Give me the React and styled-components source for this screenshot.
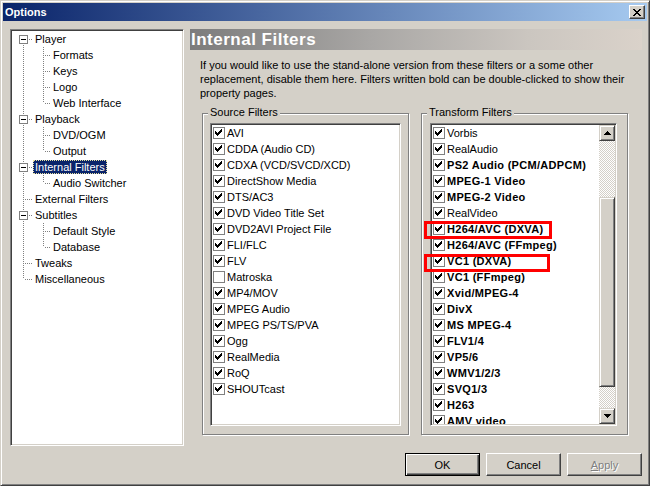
import React from 'react';
import styled, { createGlobalStyle } from 'styled-components';

const GlobalStyle = createGlobalStyle`
  html, body { margin: 0; padding: 0; background: #D4D0C8; }
  body { font-family: "Liberation Sans", Arial, sans-serif; font-size: 11px; color: #000; }
  * { box-sizing: border-box; }
`;

const Window = styled.div`
  width: 650px;
  height: 486px;
  background: #D4D0C8;
  border: 1px solid;
  border-color: #D4D0C8 #404040 #404040 #D4D0C8;
  box-shadow: inset 1px 1px 0 #fff, inset -1px -1px 0 #808080;
  padding: 2px;
  display: flex;
  flex-direction: column;
`;

const TitleBar = styled.div`
  height: 18px;
  flex-shrink: 0;
  display: flex;
  align-items: center;
  justify-content: space-between;
  padding: 0 2px 0 2px;
  background: linear-gradient(90deg, #0A246A 0%, #A6CAF0 100%);
`;

const TitleText = styled.span`
  color: #fff;
  font-weight: bold;
  font-size: 11px;
  line-height: 18px;
`;

const CloseButton = styled.div`
  width: 16px;
  height: 14px;
  background: #D4D0C8;
  border: 1px solid;
  border-color: #fff #404040 #404040 #fff;
  box-shadow: inset -1px -1px 0 #808080;
  display: flex;
  align-items: center;
  justify-content: center;
`;

const Client = styled.div`
  flex: 1;
  display: flex;
  flex-direction: column;
  padding: 8px 5px 0 7px;
`;

const MainRow = styled.div`
  display: flex;
  gap: 6px;
  height: 417px;
`;

const Sunken = styled.div`
  background: #fff;
  border: 1px solid;
  border-color: #808080 #fff #fff #808080;
  box-shadow: inset 1px 1px 0 #404040, inset -1px -1px 0 #D4D0C8;
`;

const Tree = styled(Sunken)`
  width: 174px;
  height: 100%;
  padding: 1px 0 0 2px;
  display: flex;
  flex-direction: column;
`;

const TreeRow = styled.div`
  height: 16px;
  display: flex;
  align-items: center;
`;

const Glyph = styled.svg`
  display: block;
  flex-shrink: 0;
  shape-rendering: crispEdges;
`;

const TreeLabel = styled.span`
  line-height: 14px;
  height: 14px;
  padding: 0 2px;
  white-space: nowrap;
  background: ${p => (p.$selected ? '#0A246A' : 'transparent')};
  color: ${p => (p.$selected ? '#fff' : '#000')};
  outline: ${p => (p.$selected ? '1px dotted #E8E0A0' : 'none')};
  outline-offset: -1px;
`;

const RightPane = styled.div`
  width: 452px;
  display: flex;
  flex-direction: column;
`;

const Header = styled.div`
  height: 21px;
  flex-shrink: 0;
  padding-left: 1px;
  background: linear-gradient(90deg, #7c7c7c 0%, #a9a7a5 40%, #cbc6c0 75%, #dad2ca 100%);
  color: #fff;
  font-weight: bold;
  font-size: 17px;
  letter-spacing: 0.5px;
  line-height: 21px;
`;

const Description = styled.div`
  margin: 8px 0 0 10px;
  line-height: 14px;
  white-space: nowrap;
`;

const Groups = styled.div`
  display: flex;
  gap: 12px;
  margin: 13px 0 0 12px;
`;

const GroupBox = styled.div`
  width: 207px;
  height: 322px;
  border: 1px solid #808080;
  box-shadow: inset 1px 1px 0 #fff, 1px 1px 0 #fff;
  display: flex;
  flex-direction: column;
`;

const GroupLabel = styled.span`
  align-self: flex-start;
  margin: -8px 0 0 5px;
  padding: 0 2px;
  line-height: 13px;
  height: 13px;
  background: #D4D0C8;
`;

const List = styled(Sunken)`
  position: relative;
  margin: 4px 0 0 ${p => p.$left}px;
  width: ${p => p.$width}px;
  height: 303px;
  padding: 1px;
  display: flex;
`;

const Items = styled.div`
  flex: 1;
  overflow: hidden;
  display: flex;
  flex-direction: column;
`;

const ItemRow = styled.div`
  height: 16px;
  flex-shrink: 0;
  display: flex;
  align-items: center;
  padding-left: 1px;
  white-space: nowrap;
  font-weight: ${p => (p.$bold ? 'bold' : 'normal')};
  letter-spacing: ${p => (p.$bold ? '0.3px' : '0')};
`;

const CheckBox = styled.span`
  width: 12px;
  height: 12px;
  flex-shrink: 0;
  margin-right: 2px;
  border: 1px solid #808080;
  background: #fff;
  display: flex;
  align-items: center;
  justify-content: center;
`;

const ScrollBar = styled.div`
  width: 16px;
  flex-shrink: 0;
  display: flex;
  flex-direction: column;
`;

const Raised = styled.div`
  background: #D4D0C8;
  border: 1px solid;
  border-color: #D4D0C8 #404040 #404040 #D4D0C8;
  box-shadow: inset 1px 1px 0 #fff, inset -1px -1px 0 #808080;
`;

const ArrowButton = styled(Raised)`
  height: 16px;
  flex-shrink: 0;
  display: flex;
  align-items: center;
  justify-content: center;
`;

const Track = styled.div`
  height: ${p => (p.$h ? `${p.$h}px` : 'auto')};
  flex: ${p => (p.$h ? '0 0 auto' : '1')};
  background: repeating-conic-gradient(#fff 0% 25%, #D4D0C8 0% 50%) 0 0 / 2px 2px;
`;

const Thumb = styled(Raised)`
  height: 190px;
  flex-shrink: 0;
`;

const Highlight = styled.div`
  position: absolute;
  left: ${p => p.$x}px;
  top: ${p => p.$y}px;
  width: ${p => p.$w}px;
  height: ${p => p.$h}px;
  border: 3px solid #FF0000;
  pointer-events: none;
`;

const Footer = styled.div`
  display: flex;
  justify-content: flex-end;
  gap: 6px;
  margin-top: 7px;
`;

const Button = styled.div`
  width: 75px;
  height: 23px;
  display: flex;
  align-items: center;
  justify-content: center;
  background: #D4D0C8;
  border: 1px solid;
  border-color: ${p => (p.$default ? '#000' : '#fff #404040 #404040 #fff')};
  box-shadow: ${p =>
    p.$default
      ? 'inset 1px 1px 0 #fff, inset -1px -1px 0 #404040, inset -2px -2px 0 #808080'
      : 'inset -1px -1px 0 #808080'};
  color: ${p => (p.$disabled ? '#808080' : '#000')};
  text-shadow: ${p => (p.$disabled ? '1px 1px 0 #fff' : 'none')};
`;

const CheckMark = () => (
  <Glyph width="10" height="10" viewBox="0 0 10 10">
    <path
      fill="#000"
      d="M1 3h1v3h-1z M2 4h1v3h-1z M3 5h1v3h-1z M4 4h1v3h-1z M5 3h1v3h-1z M6 2h1v3h-1z M7 1h1v3h-1z"
    />
  </Glyph>
);

const Connector = ({ w = 20, up, down, right, box }) => (
  <Glyph width={w} height="16" viewBox={`0 0 ${w} 16`}>
    <g stroke="#808080" strokeWidth="1" strokeDasharray="1 1">
      {up && <line x1="10.5" y1="0" x2="10.5" y2="8" />}
      {down && <line x1="10.5" y1="8" x2="10.5" y2="16" />}
      {right && <line x1="12" y1="8.5" x2={w} y2="8.5" />}
    </g>
    {box && (
      <>
        <rect x="6.5" y="4.5" width="8" height="8" fill="#fff" stroke="#808080" />
        <line x1="8" y1="8.5" x2="13" y2="8.5" stroke="#000" />
      </>
    )}
  </Glyph>
);

const treeItems = [
  { label: 'Player', level: 0, first: true, box: true },
  { label: 'Formats', level: 1 },
  { label: 'Keys', level: 1 },
  { label: 'Logo', level: 1 },
  { label: 'Web Interface', level: 1, lastChild: true },
  { label: 'Playback', level: 0, box: true },
  { label: 'DVD/OGM', level: 1 },
  { label: 'Output', level: 1, lastChild: true },
  { label: 'Internal Filters', level: 0, box: true, selected: true },
  { label: 'Audio Switcher', level: 1, lastChild: true },
  { label: 'External Filters', level: 0 },
  { label: 'Subtitles', level: 0, box: true },
  { label: 'Default Style', level: 1 },
  { label: 'Database', level: 1, lastChild: true },
  { label: 'Tweaks', level: 0 },
  { label: 'Miscellaneous', level: 0, last: true },
];

const sourceFilters = [
  ['AVI', true],
  ['CDDA (Audio CD)', true],
  ['CDXA (VCD/SVCD/XCD)', true],
  ['DirectShow Media', true],
  ['DTS/AC3', true],
  ['DVD Video Title Set', true],
  ['DVD2AVI Project File', true],
  ['FLI/FLC', true],
  ['FLV', true],
  ['Matroska', false],
  ['MP4/MOV', true],
  ['MPEG Audio', true],
  ['MPEG PS/TS/PVA', true],
  ['Ogg', true],
  ['RealMedia', true],
  ['RoQ', true],
  ['SHOUTcast', true],
];

const transformFilters = [
  ['Vorbis', false],
  ['RealAudio', false],
  ['PS2 Audio (PCM/ADPCM)', true],
  ['MPEG-1 Video', true],
  ['MPEG-2 Video', true],
  ['RealVideo', false],
  ['H264/AVC (DXVA)', true],
  ['H264/AVC (FFmpeg)', true],
  ['VC1 (DXVA)', true],
  ['VC1 (FFmpeg)', true],
  ['Xvid/MPEG-4', true],
  ['DivX', true],
  ['MS MPEG-4', true],
  ['FLV1/4', true],
  ['VP5/6', true],
  ['WMV1/2/3', true],
  ['SVQ1/3', true],
  ['H263', true],
  ['AMV video', true],
];

const TreeItem = ({ item }) => (
  <TreeRow>
    {item.level === 0 ? (
      <Connector up={!item.first} down={!item.last} right box={item.box} />
    ) : (
      <>
        <Connector up down />
        <Connector w={18} up down={!item.lastChild} right />
      </>
    )}
    <TreeLabel $selected={item.selected}>{item.label}</TreeLabel>
  </TreeRow>
);

const FilterRow = ({ label, checked = true, bold }) => (
  <ItemRow $bold={bold}>
    <CheckBox>{checked && <CheckMark />}</CheckBox>
    <span>{label}</span>
  </ItemRow>
);

export default function App() {
  return (
    <>
      <GlobalStyle />
      <Window>
        <TitleBar>
          <TitleText>Options</TitleText>
          <CloseButton>
            <Glyph width="8" height="7" viewBox="0 0 8 7">
              <path
                fill="#000"
                d="M0 0h2v1h-2z M6 0h2v1h-2z M1 1h2v1h-2z M5 1h2v1h-2z M2 2h4v1h-4z M3 3h2v1h-2z M2 4h4v1h-4z M1 5h2v1h-2z M5 5h2v1h-2z M0 6h2v1h-2z M6 6h2v1h-2z"
              />
            </Glyph>
          </CloseButton>
        </TitleBar>
        <Client>
          <MainRow>
            <Tree>
              {treeItems.map(item => (
                <TreeItem key={item.label} item={item} />
              ))}
            </Tree>
            <RightPane>
              <Header>Internal Filters</Header>
              <Description>
                If you would like to use the stand-alone version from these filters or a some other
                <br />
                replacement, disable them here. Filters written bold can be double-clicked to show their
                <br />
                property pages.
              </Description>
              <Groups>
                <GroupBox>
                  <GroupLabel>Source Filters</GroupLabel>
                  <List $left={7} $width={191}>
                    <Items>
                      {sourceFilters.map(([label, checked]) => (
                        <FilterRow key={label} label={label} checked={checked} />
                      ))}
                    </Items>
                  </List>
                </GroupBox>
                <GroupBox>
                  <GroupLabel>Transform Filters</GroupLabel>
                  <List $left={8} $width={187}>
                    <Items>
                      {transformFilters.map(([label, bold]) => (
                        <FilterRow key={label} label={label} bold={bold} />
                      ))}
                    </Items>
                    <ScrollBar>
                      <ArrowButton>
                        <Glyph width="7" height="4" viewBox="0 0 7 4">
                          <path fill="#000" d="M3 0h1v1h-1z M2 1h3v1h-3z M1 2h5v1h-5z M0 3h7v1h-7z" />
                        </Glyph>
                      </ArrowButton>
                      <Track $h={56} />
                      <Thumb />
                      <Track />
                      <ArrowButton>
                        <Glyph width="7" height="4" viewBox="0 0 7 4">
                          <path fill="#000" d="M0 0h7v1h-7z M1 1h5v1h-5z M2 2h3v1h-3z M3 3h1v1h-1z" />
                        </Glyph>
                      </ArrowButton>
                    </ScrollBar>
                    <Highlight $x={-7} $y={97} $w={128} $h={18} />
                    <Highlight $x={-7} $y={130} $w={126} $h={18} />
                  </List>
                </GroupBox>
              </Groups>
            </RightPane>
          </MainRow>
          <Footer>
            <Button $default>OK</Button>
            <Button>Cancel</Button>
            <Button $disabled>
              <span>
                <u>A</u>pply
              </span>
            </Button>
          </Footer>
        </Client>
      </Window>
    </>
  );
}
